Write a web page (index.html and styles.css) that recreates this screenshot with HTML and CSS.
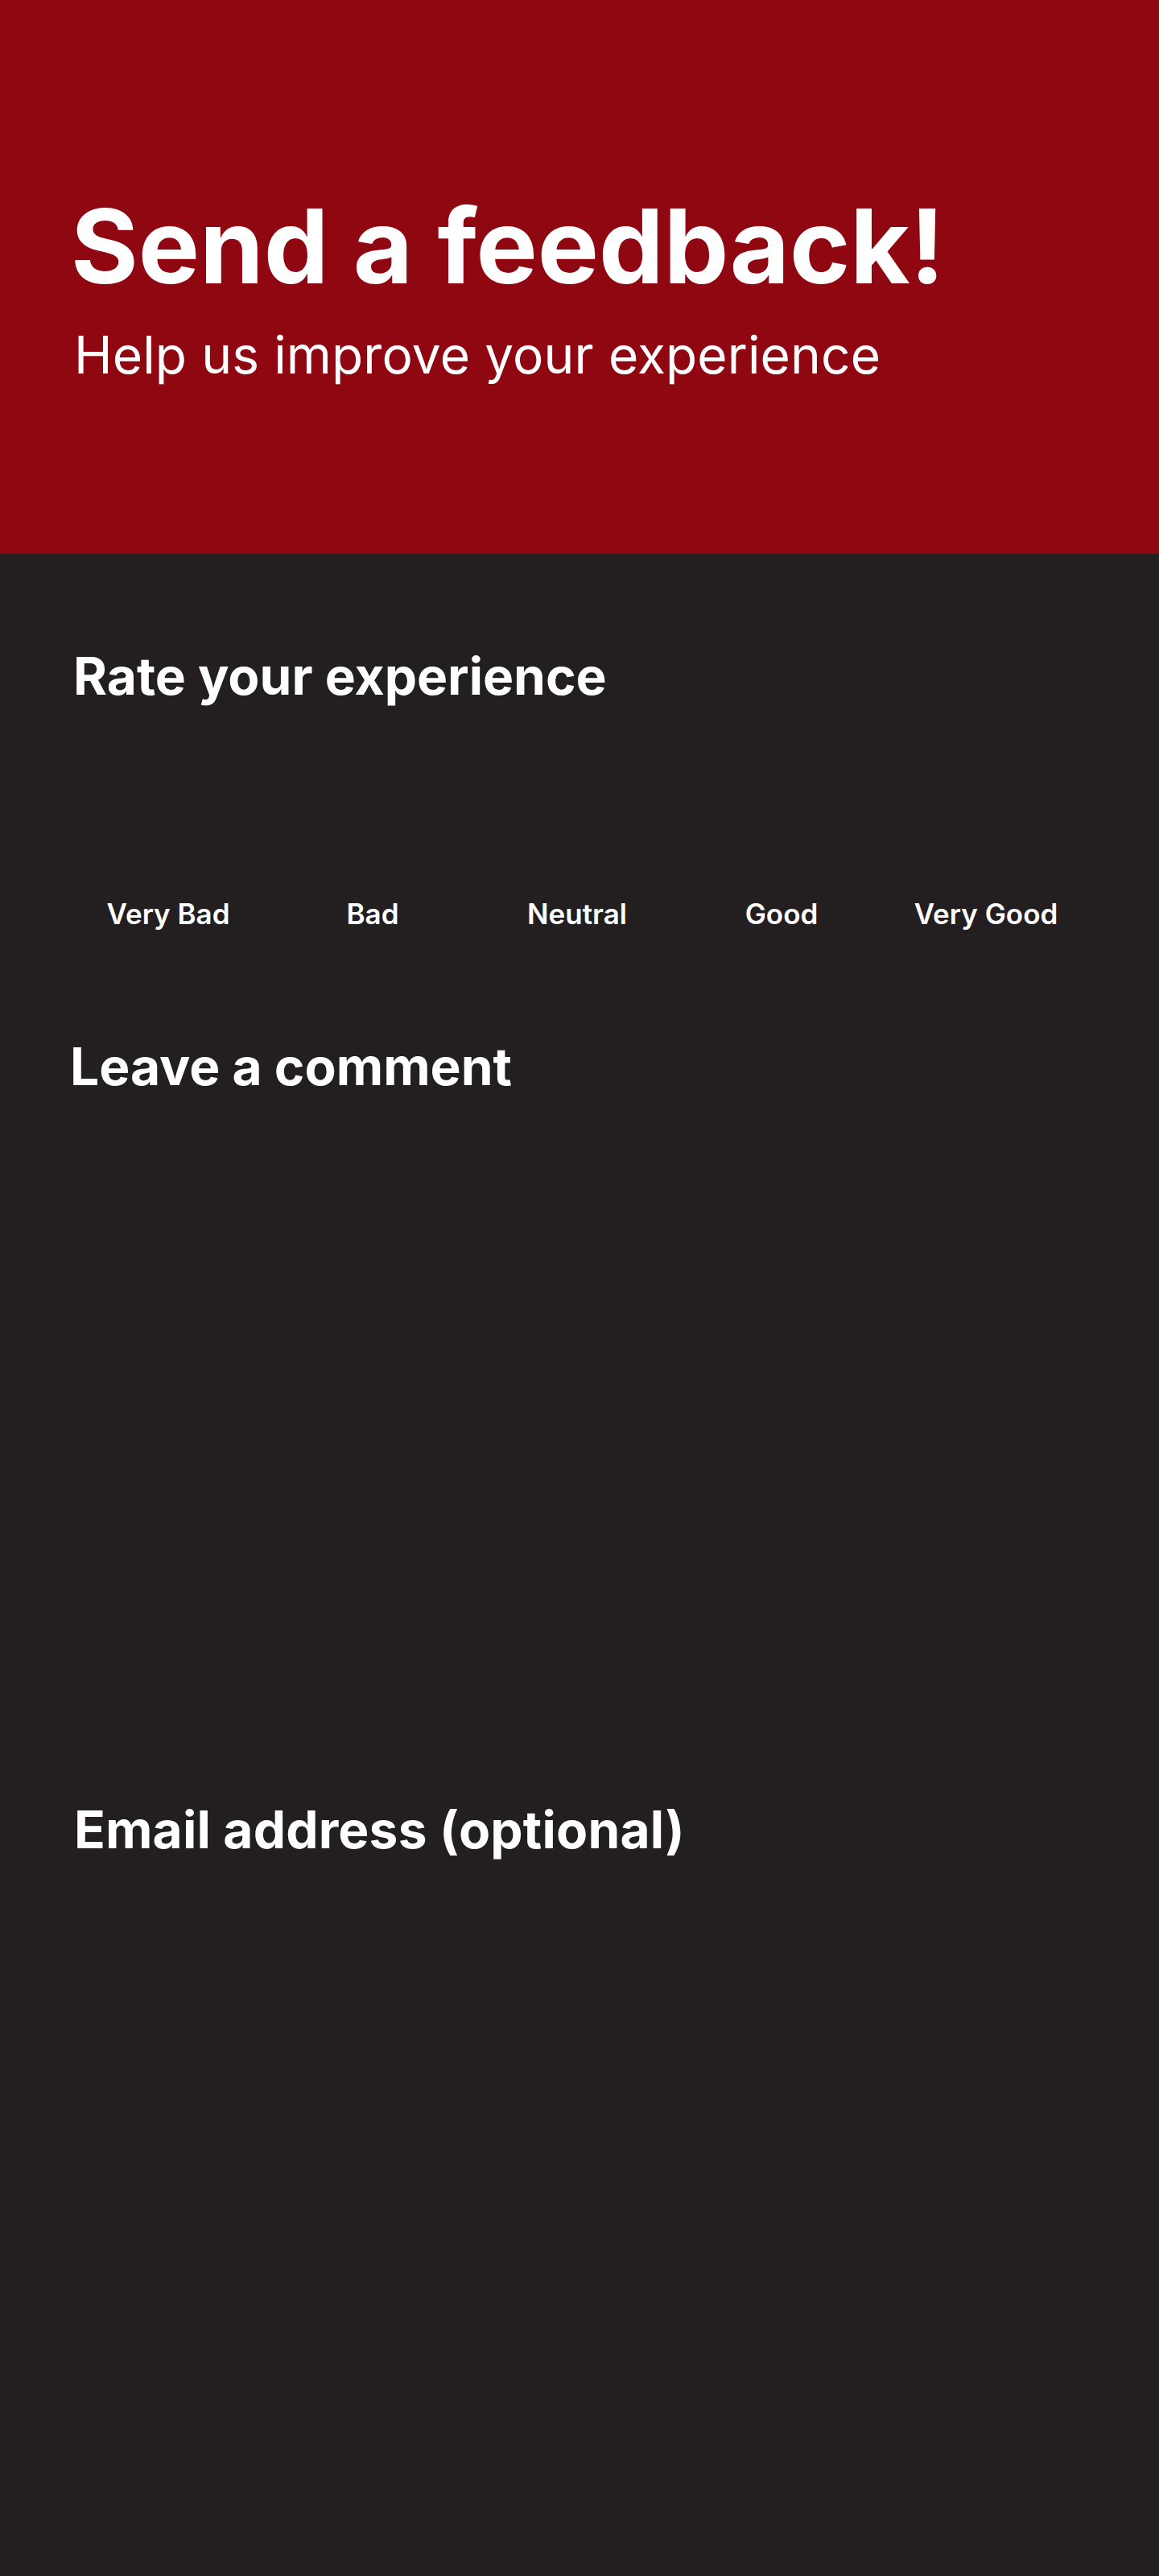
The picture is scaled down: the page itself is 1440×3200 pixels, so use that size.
FILE: index.html
```html
<!DOCTYPE html>
<html lang="en">
<head>
<meta charset="utf-8">
<title>Send a feedback!</title>
<link rel="stylesheet" href="styles.css">
</head>
<body>
<header class="hero">
  <h1 class="hero-title">Send a feedback!</h1>
  <p class="hero-sub">Help us improve your experience</p>
</header>
<main class="content">
  <section class="rate">
    <h2 class="section-title">Rate your experience</h2>
    <div class="rating-row">
      <div class="rating-item"><div class="face"></div><span class="rating-label">Very Bad</span></div>
      <div class="rating-item"><div class="face"></div><span class="rating-label">Bad</span></div>
      <div class="rating-item"><div class="face"></div><span class="rating-label">Neutral</span></div>
      <div class="rating-item"><div class="face"></div><span class="rating-label">Good</span></div>
      <div class="rating-item"><div class="face"></div><span class="rating-label">Very Good</span></div>
    </div>
  </section>
  <section class="comment">
    <h2 class="section-title comment-title">Leave a comment</h2>
    <div class="comment-box"></div>
  </section>
  <section class="email">
    <h2 class="section-title email-title">Email address (optional)</h2>
    <div class="email-box"></div>
  </section>
</main>
</body>
</html>
```
FILE: styles.css
```css
html, body {
  margin: 0;
  padding: 0;
  background: #231f20;
}
body {
  font-family: Inter, "Noto Sans", "Liberation Sans", sans-serif;
  color: #ffffff;
  min-height: 3200px;
}
.hero {
  background: #8f0710;
  height: 688px;
  box-sizing: border-box;
  padding: 229px 0 0 88px;
}
.hero-title {
  margin: 0;
  font-size: 128px;
  font-weight: 700;
  line-height: 1.2;
}
.hero-sub {
  margin: 20px 0 0 4px;
  font-size: 64px;
  font-weight: 400;
  line-height: 1.2;
  letter-spacing: 0.13px;
}
.content {
  padding-top: 114px;
}
.section-title {
  margin: 0;
  font-size: 64px;
  font-weight: 700;
  line-height: 1.2;
  padding-left: 91px;
}
.rating-row {
  display: grid;
  grid-template-columns: repeat(5, 254px);
  margin-left: 82px;
  margin-top: 0;
}
.rating-item {
  display: flex;
  flex-direction: column;
  align-items: center;
}
.face {
  height: 235px;
}
.rating-label {
  font-size: 35px;
  font-weight: 600;
  line-height: 1.2;
}
.comment {
  margin-top: 131px;
}
.comment-title {
  padding-left: 87px;
}
.comment-box {
  height: 871px;
}
.email-title {
  padding-left: 92px;
  letter-spacing: 0.17px;
}
.email-box {
  height: 800px;
}
```
